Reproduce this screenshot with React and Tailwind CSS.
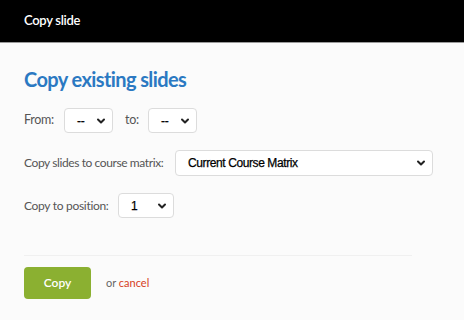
import { ChevronDown } from 'lucide-react';

function FakeSelect({ value, className }) {
    return (
        <div
            className={`shrink-0 flex items-center justify-between h-[25px] bg-white border border-[#dcdcdc] rounded-[4px] pl-[12px] pr-[5px] font-['Liberation_Sans',Arial,sans-serif] text-[12px] text-black [-webkit-text-stroke:0.25px_black] ${className}`}
        >
            <span>{value}</span>
            <ChevronDown size={12} strokeWidth={4} className="text-[#222]" />
        </div>
    );
}

export default function App() {
    return (
        <div className="w-[464px] h-[320px] bg-[#fbfbfb] font-['Lato','Open_Sans',sans-serif] overflow-hidden">
            <div className="h-[43px] bg-black border-b border-[#9a9a9a] flex items-center px-[24px]">
                <span className="text-white text-[13px] font-semibold tracking-[-0.3px]">Copy slide</span>
            </div>

            <div className="px-[24px]">
                <h1 className="mt-[24px] text-[20px] leading-[24px] font-bold text-[#2b79c2] tracking-[-0.6px]">
                    Copy existing slides
                </h1>

                <div className="mt-[17px] flex items-center text-[12.5px] text-[#555] tracking-[-0.3px] whitespace-nowrap">
                    <span className="w-[40px] shrink-0">From:</span>
                    <FakeSelect value="--" className="w-[49px]" />
                    <span className="ml-[12px] w-[23px] shrink-0">to:</span>
                    <FakeSelect value="--" className="w-[49px]" />
                </div>

                <div className="mt-[17px] flex items-center text-[12px] text-[#555] tracking-[-0.4px] whitespace-nowrap">
                    <span className="w-[151px] shrink-0">Copy slides to course matrix:</span>
                    <FakeSelect value="Current Course Matrix" className="w-[258px] h-[26px]" />
                </div>

                <div className="mt-[17px] flex items-center text-[12px] text-[#555] tracking-[-0.3px] whitespace-nowrap">
                    <span className="w-[94px] shrink-0">Copy to position:</span>
                    <FakeSelect value="1" className="w-[56px]" />
                </div>

                <div className="mt-[37px] w-[388px] border-t border-[#f0f0f0]" />

                <div className="mt-[11px] flex items-center">
                    <button className="w-[67px] h-[32px] rounded-[4px] bg-[#8bb031] text-white text-[12px] font-semibold">
                        Copy
                    </button>
                    <span className="ml-[15px] text-[11px] text-[#666]">
                        or <span className="text-[#d6401c]">cancel</span>
                    </span>
                </div>
            </div>
        </div>
    );
}
